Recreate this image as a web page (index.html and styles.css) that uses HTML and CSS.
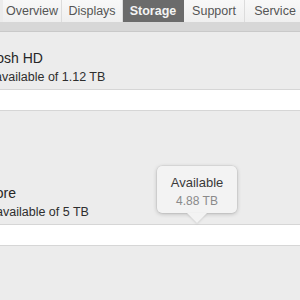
FILE: index.html
```html
<!DOCTYPE html>
<html lang="en">
<head>
    <meta charset="UTF-8">
    <title>Storage</title>
    <link rel="stylesheet" href="styles.css">
</head>
<body>
    <div class="window">
        <div class="tabs">
            <div class="tab tab-first">Overview</div>
            <div class="tab">Displays</div>
            <div class="tab active">Storage</div>
            <div class="tab">Support</div>
            <div class="tab tab-last">Service</div>
        </div>
        <div class="tab-strip"></div>

        <div class="disk">
            <div class="disk-info">
                <div class="disk-name">Macintosh HD</div>
                <div class="disk-free">1.1 TB available of 1.12 TB</div>
            </div>
        </div>
        <div class="disk-bar"></div>

        <div class="disk disk-tall">
            <div class="disk-info disk-info-wide">
                <div class="disk-name">Data Store</div>
                <div class="disk-free">4.88 TB available of 5 TB</div>
            </div>
            <div class="tooltip">
                <div class="tooltip-title">Available</div>
                <div class="tooltip-value">4.88 TB</div>
            </div>
        </div>
        <div class="disk-bar"></div>

        <div class="rest"></div>
    </div>
</body>
</html>
```

FILE: styles.css
```css
* {
    margin: 0;
    padding: 0;
    box-sizing: border-box;
}

body {
    font-family: 'Liberation Sans', Arial, sans-serif;
    background: #ececec;
    color: #2b2b2b;
    overflow: hidden;
}

.window {
    width: 300px;
    height: 300px;
    overflow: hidden;
    background: #ececec;
}

.tabs {
    display: flex;
    height: 22px;
    margin-left: 3px;
    background: #f4f4f4;
}

.tab {
    width: 61px;
    flex-shrink: 0;
    font-size: 12.5px;
    line-height: 22px;
    text-align: center;
    color: #555;
    border-right: 1px solid #dcdcdc;
    background: linear-gradient(#f8f8f8, #efefef);
}

.tab-first {
    width: 59px;
}

.tab-last {
    width: 60px;
    border-right: none;
}

.tab.active {
    background: #6b6b6b;
    color: #f4f4f4;
    font-weight: bold;
    border-right-color: #6b6b6b;
}

.tab-strip {
    height: 10px;
    background: #d7d7d7;
    border-bottom: 1px solid #c9c9c9;
}

.disk {
    position: relative;
    height: 58px;
    border-bottom: 1px solid #d6d6d6;
    display: flex;
    align-items: flex-end;
    padding-bottom: 3px;
}

.disk-tall {
    height: 114px;
}

.disk-info {
    margin-left: -45px;
}

.disk-info-wide {
    margin-left: -51px;
}

.disk-name {
    font-size: 14px;
    line-height: 19px;
    color: #262626;
}

.disk-free {
    font-size: 12.5px;
    line-height: 18px;
    color: #2e2e2e;
}

.disk-bar {
    height: 21px;
    background: #ffffff;
    border-bottom: 1px solid #d6d6d6;
}

.tooltip {
    position: absolute;
    left: 157px;
    top: 55px;
    width: 80px;
    height: 47px;
    background: #f3f3f3;
    border-radius: 5px;
    box-shadow: 0 1px 4px rgba(0, 0, 0, 0.22), 0 0 0 0.5px rgba(0, 0, 0, 0.08);
    text-align: center;
    padding-top: 8px;
}

.tooltip::after {
    content: "";
    position: absolute;
    left: 30px;
    bottom: -10px;
    width: 0;
    height: 0;
    border-left: 10px solid transparent;
    border-right: 10px solid transparent;
    border-top: 10px solid #f3f3f3;
    filter: drop-shadow(0 1px 1px rgba(0, 0, 0, 0.12));
}

.tooltip-title {
    font-size: 13px;
    line-height: 18px;
    color: #3a3a3a;
}

.tooltip-value {
    font-size: 12px;
    line-height: 18px;
    color: #8a8a8a;
}
```
